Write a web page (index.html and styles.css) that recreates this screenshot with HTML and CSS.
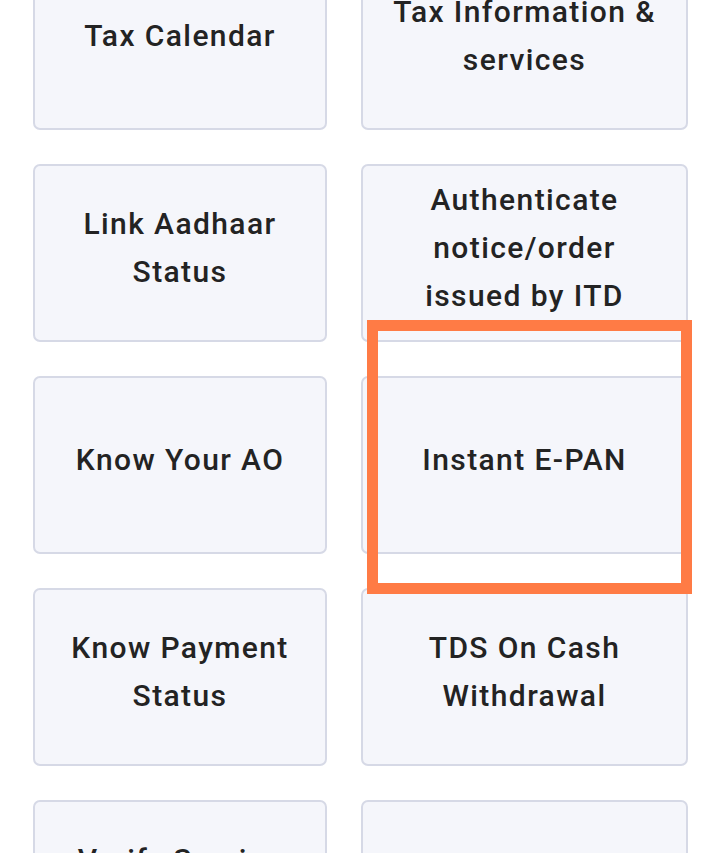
FILE: index.html
```html
<!DOCTYPE html>
<html lang="en">
<head>
<meta charset="utf-8">
<title>Quick Links</title>
<link rel="stylesheet" href="styles.css">
</head>
<body>
<div class="grid">
  <div class="card">Tax Calendar</div>
  <div class="card">Tax Information &amp; services</div>
  <div class="card">Link Aadhaar Status</div>
  <div class="card">Authenticate notice/order issued by ITD</div>
  <div class="card">Know Your AO</div>
  <div class="card">Instant E-PAN</div>
  <div class="card">Know Payment Status</div>
  <div class="card">TDS On Cash Withdrawal</div>
  <div class="card">Verify Service Request</div>
  <div class="card">Know TAN Details</div>
</div>
<div class="highlight"></div>
</body>
</html>
```
FILE: styles.css
```css
html, body {
  margin: 0;
  padding: 0;
  background: #ffffff;
  overflow: hidden;
}
body {
  position: relative;
  width: 720px;
  height: 853px;
  font-family: Roboto, "Noto Sans", "Liberation Sans", sans-serif;
}
.grid {
  display: grid;
  grid-template-columns: 294px 327px;
  grid-auto-rows: 178px;
  column-gap: 34px;
  row-gap: 34px;
  padding-left: 33px;
  margin-top: -48px;
}
.card {
  box-sizing: border-box;
  background: #f5f6fb;
  border: 2px solid #d6d9e6;
  border-radius: 7px;
  display: flex;
  align-items: center;
  justify-content: center;
  text-align: center;
  padding: 0 24px 10px;
  font-size: 30px;
  font-weight: 500;
  line-height: 48px;
  color: #232323;
  letter-spacing: 1.4px;
}
.highlight {
  position: absolute;
  left: 367px;
  top: 320px;
  width: 325px;
  height: 274px;
  box-sizing: border-box;
  border: 11px solid #ff7b45;
}
```
